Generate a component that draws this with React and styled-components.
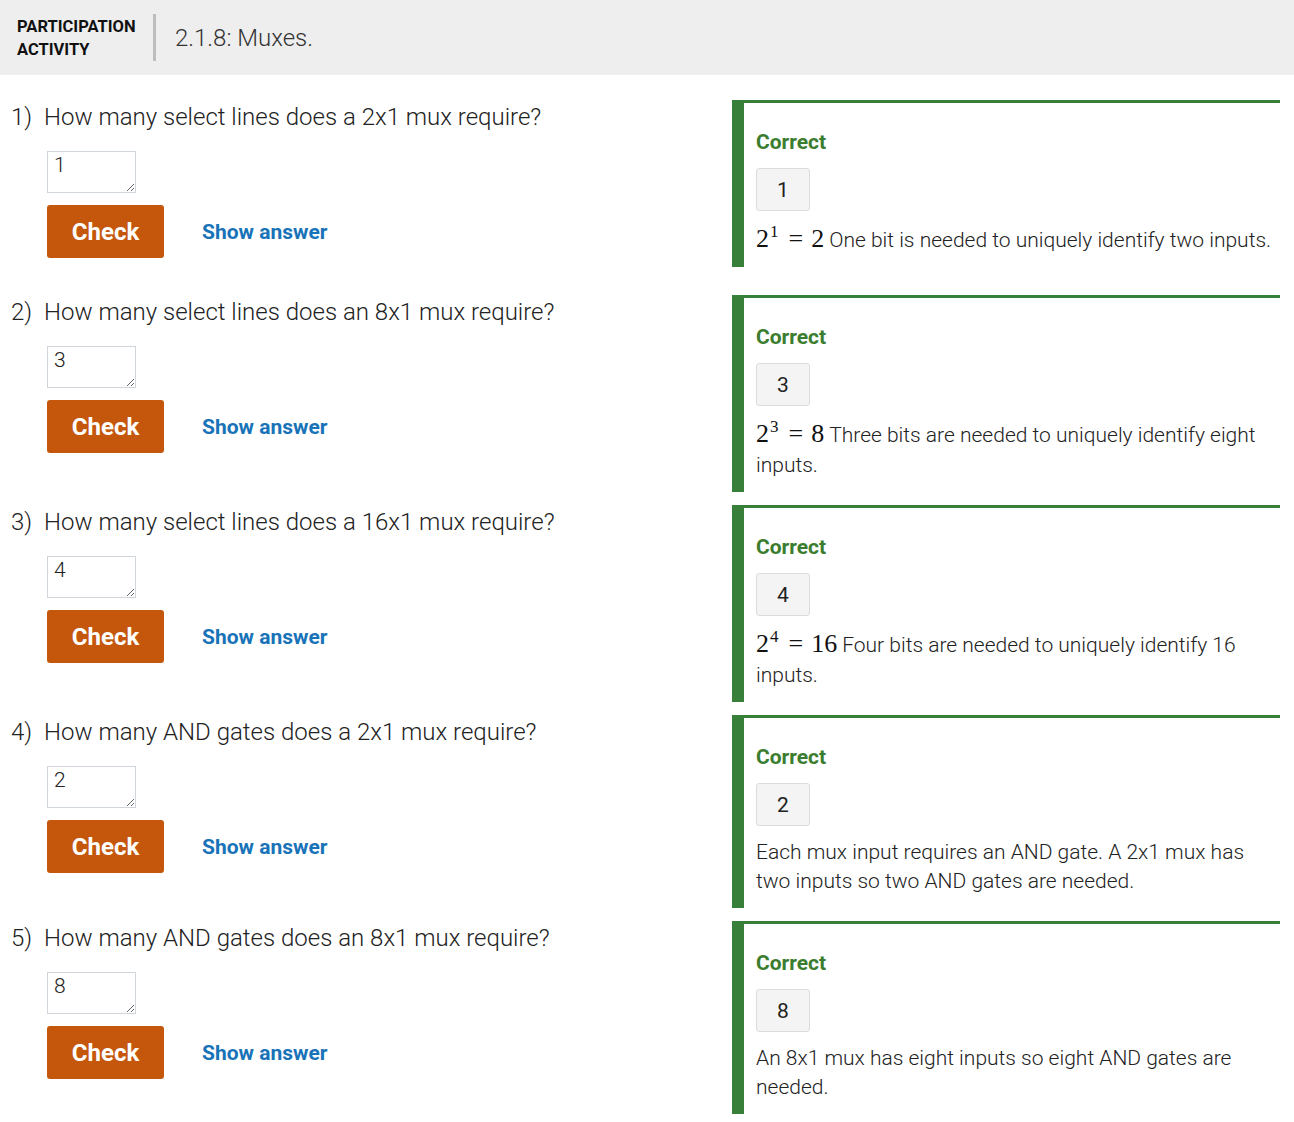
import styled, { createGlobalStyle } from "styled-components";

const GlobalStyle = createGlobalStyle`
body {
  margin: 0;
  background: #ffffff;
  font-family: Roboto, "Liberation Sans", sans-serif;
  color: #222;
}
`;

const Header = styled.div`
height: 75px;
background: #eeeeee;
display: flex;
align-items: center;
padding-left: 17px;
`;
const Kind = styled.div`
font-size: 16.5px;
font-weight: 700;
line-height: 23px;
color: #111;
width: 136px;
`;
const Divider = styled.div`
width: 3px;
height: 47px;
background: #bdbdbd;
margin-right: 19px;
`;
const Title = styled.h1`
margin: 0;
font-size: 24px;
font-weight: 300;
color: #333;
`;
const Content = styled.div`
padding: 25px 14px 0 11px;
`;
const Row = styled.div`
display: grid;
grid-template-columns: 1fr 548px;
align-items: start;
`;
const Left = styled.div`
padding-bottom: 37px;
`;
const Question = styled.div`
display: flex;
font-size: 24px;
font-weight: 300;
line-height: 34px;
color: #222;
`;
const Num = styled.span`
width: 33px;
flex: none;
`;
const Controls = styled.div`
padding-left: 36px;
`;
const Answer = styled.textarea`
display: block;
box-sizing: border-box;
width: 89px;
height: 42px;
margin-top: 17px;
padding: 0 6px;
border: 1px solid #cfd5da;
font-family: Roboto, sans-serif;
font-size: 21px;
font-weight: 300;
line-height: 26px;
color: #222;
`;
const Actions = styled.div`
display: flex;
align-items: center;
gap: 38px;
margin-top: 12px;
`;
const CheckButton = styled.button`
width: 117px;
height: 53px;
border: none;
border-radius: 3px;
background: #c4570c;
color: #fff;
font-family: Roboto, sans-serif;
font-size: 24px;
font-weight: 700;
`;
const ShowLink = styled.span`
color: #1873b8;
font-size: 21px;
font-weight: 700;
`;
const Feedback = styled.div`
border-top: 3px solid #38803a;
border-left: 12px solid #38803a;
padding: 27px 2px 12px 12px;
margin-bottom: 13px;
`;
const Correct = styled.div`
color: #3b7d2f;
font-size: 21px;
font-weight: 700;
line-height: 24px;
`;
const Given = styled.div`
box-sizing: border-box;
width: 54px;
height: 43px;
margin-top: 14px;
display: flex;
align-items: center;
justify-content: center;
background: #f4f4f4;
border: 1px solid #dcdcdc;
border-radius: 3px;
font-size: 21px;
`;
const Explain = styled.p`
margin: ${p => (p.$math ? "14px" : "12px")} 0 0;
font-size: 21px;
font-weight: 300;
line-height: ${p => (p.$math ? "30px" : "29px")};
color: #222;
`;
const Math = styled.span`
font-family: "Liberation Serif", "DejaVu Serif", serif;
font-size: 26px;
font-weight: 400;
line-height: 1;
color: #111;
margin-right: 5px;
`;
const Sup = styled.sup`
font-size: 17px;
line-height: 0;
vertical-align: 10px;
margin-left: 1px;
`;
const Eq = styled.span`
margin: 0 8px 0 10px;
`;

const items = [
  { q: "How many select lines does a 2x1 mux require?", a: "1", base: "2", exp: "1", res: "2", text: "One bit is needed to uniquely identify two inputs." },
  { q: "How many select lines does an 8x1 mux require?", a: "3", base: "2", exp: "3", res: "8", text: "Three bits are needed to uniquely identify eight inputs." },
  { q: "How many select lines does a 16x1 mux require?", a: "4", base: "2", exp: "4", res: "16", text: "Four bits are needed to uniquely identify 16 inputs." },
  { q: "How many AND gates does a 2x1 mux require?", a: "2", text: "Each mux input requires an AND gate. A 2x1 mux has two inputs so two AND gates are needed." },
  { q: "How many AND gates does an 8x1 mux require?", a: "8", text: "An 8x1 mux has eight inputs so eight AND gates are needed." },
];

const App = () => {
  return (
    <>
      <GlobalStyle />
      <Header>
        <Kind>PARTICIPATION<br />ACTIVITY</Kind>
        <Divider />
        <Title>2.1.8: Muxes.</Title>
      </Header>
      <Content>
        {items.map((item, index) => (
          <Row key={index}>
            <Left>
              <Question>
                <Num>{index + 1})</Num>
                <span>{item.q}</span>
              </Question>
              <Controls>
                <Answer readOnly value={item.a} />
                <Actions>
                  <CheckButton>Check</CheckButton>
                  <ShowLink>Show answer</ShowLink>
                </Actions>
              </Controls>
            </Left>
            <Feedback>
              <Correct>Correct</Correct>
              <Given>{item.a}</Given>
              <Explain $math={!!item.base}>
                {item.base && (
                  <Math>
                    {item.base}<Sup>{item.exp}</Sup><Eq>=</Eq>{item.res}
                  </Math>
                )}
                {item.text}
              </Explain>
            </Feedback>
          </Row>
        ))}
      </Content>
    </>
  );
};
export default App;
